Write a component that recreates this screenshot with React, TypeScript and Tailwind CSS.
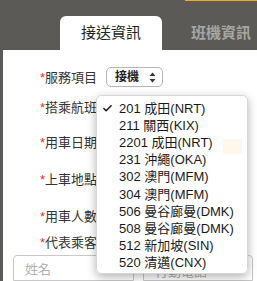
import { Check } from "lucide-react";

const flights = [
  "201 成田(NRT)",
  "211 關西(KIX)",
  "2201 成田(NRT)",
  "231 沖繩(OKA)",
  "302 澳門(MFM)",
  "304 澳門(MFM)",
  "506 曼谷廊曼(DMK)",
  "508 曼谷廊曼(DMK)",
  "512 新加坡(SIN)",
  "520 清邁(CNX)",
];

const font = { fontFamily: '"Liberation Sans", "Noto Sans CJK TC", sans-serif' };

function Label({ text }: { text: string }) {
  return (
    <div className="w-[66px] shrink-0 text-[13px] text-[#333] leading-none">
      <span className="text-[#e0302a]">*</span>
      {text}
    </div>
  );
}

export default function App() {
  return (
    <div className="relative w-[257px] h-[281px] overflow-hidden bg-[#5b5a56]" style={font}>
      {/* top bar */}
      <div className="h-[50px] relative">
        <div className="absolute right-0 top-0 h-[1px] w-[72px] bg-[#f5a623]" />
        <div className="flex items-end h-full pl-[60px]">
          <div className="w-[102px] h-[34px] bg-white rounded-t-[6px] flex items-center justify-center text-[15px] text-[#222]">
            接送資訊
          </div>
          <div className="ml-[29px] h-[34px] flex items-center text-[15px] font-bold text-[#a6a6a4]">
            班機資訊
          </div>
        </div>
      </div>

      {/* form panel */}
      <div className="ml-[3px] bg-white h-[231px] flex flex-col pl-[37px] pt-[17px]">
        <div className="h-[20px] flex items-center">
          <Label text="服務項目" />
          <div className="w-[57px] h-[20px] border border-[#b5b5b5] rounded-[5px] flex items-center justify-between pl-[8px] pr-[6px] bg-white">
            <span className="text-[12px] font-semibold text-[#222]">接機</span>
            <svg width="7" height="11" viewBox="0 0 7 11">
              <path d="M3.5 0.5 L6.5 4 L0.5 4 Z" fill="#333" />
              <path d="M3.5 10.5 L6.5 7 L0.5 7 Z" fill="#333" />
            </svg>
          </div>
        </div>
        <div className="h-[20px] mt-[11px] flex items-center">
          <Label text="搭乘航班" />
        </div>
        <div className="h-[20px] mt-[17px] flex items-center">
          <Label text="用車日期" />
        </div>
        <div className="h-[20px] mt-[18px] flex items-center">
          <Label text="上車地點" />
        </div>
        <div className="h-[20px] mt-[19px] flex items-center">
          <Label text="用車人數" />
        </div>
        <div className="h-[20px] mt-[8px] flex items-center">
          <Label text="代表乘客" />
        </div>
        <div className="flex mt-[3px] -ml-[27px] gap-[9px]">
          <div className="w-[121px] h-[26px] border border-[#c8c8c8] rounded-t-[4px] px-[11px] pt-[7px] text-[13px] leading-none text-[#b0b0b0]">
            姓名
          </div>
          <div className="w-[110px] h-[26px] border border-[#c8c8c8] rounded-t-[4px] px-[11px] pt-[9px] text-[13px] leading-none text-[#b0b0b0]">
            行動電話
          </div>
        </div>
      </div>

      {/* dropdown menu */}
      <div className="absolute left-[96px] top-[95px] w-[152px] h-[179px] bg-white/[0.97] rounded-[5px] border border-[#d6d6d6] shadow-[0_3px_10px_rgba(0,0,0,0.3)] py-[4px]">
        <div className="absolute right-[5px] top-[43px] w-[19px] h-[15px] bg-[#fff6ec]" />
        {flights.map((f, i) => (
          <div key={f} className="relative h-[17.1px] flex items-center text-[13px] text-[#1a1a1a] leading-none">
            <span className="w-[22px] pl-[5px] flex items-center">
              {i === 0 && <Check size={11} strokeWidth={3} color="#111" />}
            </span>
            <span>{f}</span>
          </div>
        ))}
      </div>
    </div>
  );
}
